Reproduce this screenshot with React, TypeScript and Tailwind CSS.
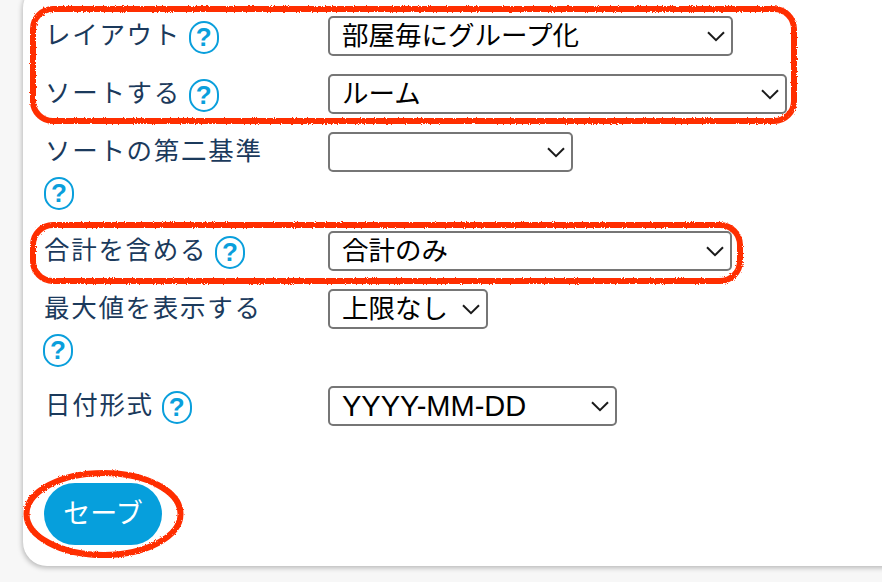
const jp = "font-['Liberation_Sans','Noto_Sans_CJK_JP',sans-serif]";

function HelpIcon() {
  return (
    <span className="-my-2 -ml-[1px] inline-flex h-[33px] w-[30px] items-center justify-center rounded-full border-2 border-[#0a9fdc] align-middle font-['Liberation_Sans',sans-serif] text-[26px] leading-none font-bold tracking-normal text-[#0a9fdc]">
      ?
    </span>
  );
}

function Picker({ value, width, size }: { value: string; width: string; size: string }) {
  return (
    <div className={`relative shrink-0 ${width}`}>
      <select
        defaultValue={value}
        className={`h-10 w-full appearance-none rounded-[5px] border-2 border-[#767676] bg-white pl-3 leading-none text-black outline-none ${size} ${jp}`}
      >
        <option value={value}>{value}</option>
      </select>
      <svg className="pointer-events-none absolute top-[15px] right-[8px]" width="18" height="11" viewBox="0 0 18 11" fill="none">
        <path d="M1 1.2 9 9.2 17 1.2" stroke="#1a1a1a" strokeWidth="2" />
      </svg>
    </div>
  );
}

const rows = [
  { label: "レイアウト", value: "部屋毎にグループ化", width: "w-[405px]", gap: "mb-[18px]", indent: "pl-[1px]" },
  { label: "ソートする", value: "ルーム", width: "w-[459px]", gap: "mb-[18px]", indent: "pl-[1px]" },
  { label: "ソートの第二基準", value: "", width: "w-[245px]", gap: "mb-[20px]", indent: "pl-[1px]" },
  { label: "合計を含める", value: "合計のみ", width: "w-[404px]", gap: "mb-[18px]", indent: "" },
  { label: "最大値を表示する", value: "上限なし", width: "w-[160px]", gap: "mb-[18px]", indent: "" },
  { label: "日付形式", value: "YYYY-MM-DD", width: "w-[289px]", gap: "mb-[57px]", indent: "pl-[1px]" },
];

export default function App() {
  return (
    <div className={`relative h-[582px] w-[882px] overflow-hidden bg-[#f7f7f7] ${jp}`}>
      <div className="-mt-4 ml-[23px] h-[582px] w-[900px] rounded-[24px] bg-white pt-8 pl-[21px] shadow-[-1px_2px_5px_rgba(0,0,0,0.25)]">
        {rows.map((row) => (
          <div key={row.label} className={`flex items-start ${row.gap}`}>
            <div className={`-mt-[1px] mr-[64px] w-[220px] text-[25.5px] leading-[40px] tracking-[1.7px] text-[#1b3a5c] ${row.indent}`}>
              {row.label} <HelpIcon />
            </div>
            <Picker value={row.value} width={row.width} size={row.value.startsWith("Y") ? "text-[29px]" : "text-[26.5px]"} />
          </div>
        ))}
        <button className="h-[62px] w-[118px] rounded-full bg-[#069fdc] text-[27px] text-white">セーブ</button>
      </div>

      {/* red hand-drawn annotation rings */}
      <svg className="pointer-events-none absolute inset-0" width="882" height="582" viewBox="0 0 882 582" fill="none">
        <defs>
          <filter id="rough" x="-5%" y="-10%" width="110%" height="120%">
            <feTurbulence type="fractalNoise" baseFrequency="0.9" numOctaves="2" seed="4" />
            <feDisplacementMap in="SourceGraphic" scale="3" />
          </filter>
        </defs>
        <g stroke="#ff2d06" strokeWidth="6" filter="url(#rough)">
          <rect x="33" y="9" width="761" height="112" rx="20" />
          <rect x="33" y="225" width="707" height="56" rx="20" />
          <ellipse cx="103.5" cy="514" rx="77" ry="41" />
        </g>
      </svg>
    </div>
  );
}
